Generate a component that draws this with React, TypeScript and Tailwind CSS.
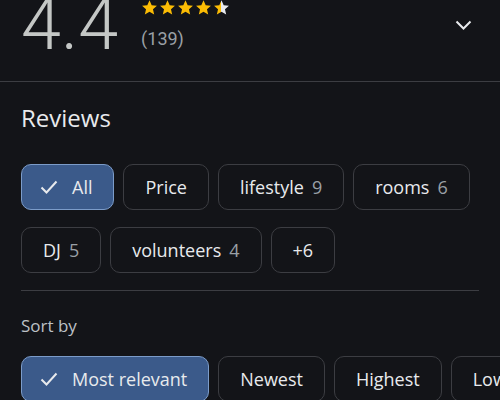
import React from 'react';

type Chip = { label: string; count?: number; selected?: boolean };

const topics: Chip[] = [
  { label: 'All', selected: true },
  { label: 'Price' },
  { label: 'lifestyle', count: 9 },
  { label: 'rooms', count: 6 },
  { label: 'DJ', count: 5 },
  { label: 'volunteers', count: 4 },
  { label: '+6' },
];

const sorts: Chip[] = [
  { label: 'Most relevant', selected: true },
  { label: 'Newest' },
  { label: 'Highest' },
  { label: 'Lowest' },
];

const Star = ({ half = false }: { half?: boolean }) => (
  <svg className="h-[17px] w-[17px]" viewBox="0 0 24 24" aria-hidden="true">
    {half && (
      <defs>
        <linearGradient id="halfStar">
          <stop offset="50%" stopColor="#fbbc04" />
          <stop offset="50%" stopColor="#e8eaed" />
        </linearGradient>
      </defs>
    )}
    <path
      d="M12 1.8l3.1 6.9 7.4.7-5.6 5 1.7 7.4L12 17.9l-6.6 3.9 1.7-7.4-5.6-5 7.4-.7z"
      fill={half ? 'url(#halfStar)' : '#fbbc04'}
    />
  </svg>
);

const Check = () => (
  <svg className="h-[14px] w-[18px]" viewBox="0 0 18 14" fill="none" aria-hidden="true">
    <path d="M1.5 7.5l5 5L16.5 1.5" stroke="#e8eaed" strokeWidth="2" />
  </svg>
);

const ChipButton = ({ chip }: { chip: Chip }) => (
  <button
    className={`flex h-[46px] shrink-0 items-center rounded-[10px] border text-[18px] font-medium text-[#e8eaed] ${
      chip.selected
        ? 'gap-[14px] border-[#7c9cc9] bg-[#3b5a8a] pl-[18px] pr-[21px]'
        : 'border-[#3c3d42] px-[21px]'
    }`}
  >
    {chip.selected && <Check />}
    <span>{chip.label}</span>
    {chip.count !== undefined && <span className="ml-[8px] text-[#9aa0a6]">{chip.count}</span>}
  </button>
);

export default function App() {
  return (
    <div className="h-[400px] w-[500px] overflow-hidden bg-[#131418] font-['Open_Sans',sans-serif]">
      {/* rating header */}
      <div className="-mt-[11px] flex items-start pl-[21px] pr-[28px]">
        <div className="font-['Roboto',sans-serif] text-[72px] font-light leading-[72px] text-[#c4c7c5]">4.4</div>
        <div className="ml-[23px] mt-[10px] flex flex-col">
          <div className="flex gap-[1px]">
            <Star />
            <Star />
            <Star />
            <Star />
            <Star half />
          </div>
          <div className="mt-[9px] font-['Roboto',sans-serif] text-[18px] text-[#9aa0a6]">(139)</div>
        </div>
        <svg className="ml-auto mt-[31px] h-[10px] w-[17px]" viewBox="0 0 17 10" fill="none" aria-hidden="true">
          <path d="M1.5 1.5l7 7 7-7" stroke="#e8eaed" strokeWidth="2" />
        </svg>
      </div>

      <div className="mt-[20px] h-px bg-[#3c3d42]" />

      <div className="px-[21px]">
        <h2 className="mt-[21px] text-[24px] leading-[30px] text-[#e8eaed]">Reviews</h2>

        <div className="mt-[31px] flex flex-wrap gap-x-[9px] gap-y-[17px]">
          {topics.map((c) => (
            <ChipButton key={c.label} chip={c} />
          ))}
        </div>

        <div className="mt-[17px] h-px bg-[#3c3d42]" />

        <div className="mt-[24px] text-[17px] leading-[22px] text-[#bdc1c6]">Sort by</div>

        <div className="mt-[19px] flex gap-x-[9px]">
          {sorts.map((c) => (
            <ChipButton key={c.label} chip={c} />
          ))}
        </div>
      </div>
    </div>
  );
}
